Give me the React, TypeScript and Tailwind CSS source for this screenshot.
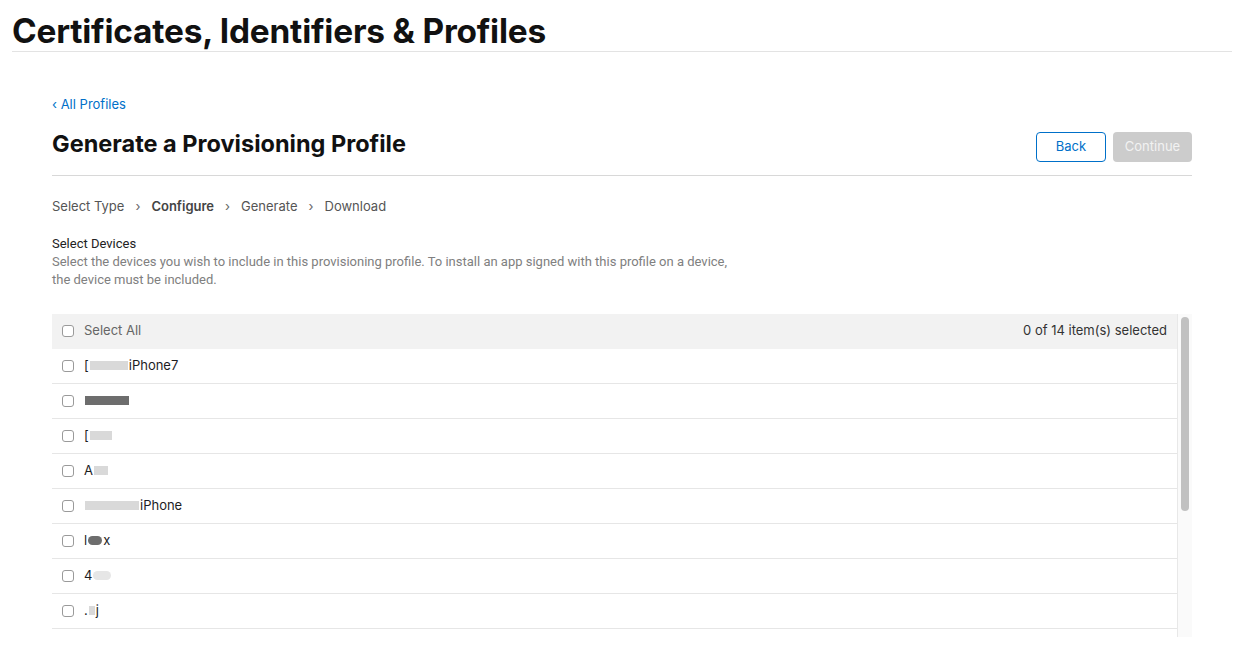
import React from 'react';

const font = { fontFamily: 'Inter, "Noto Sans", sans-serif' };
const narrow = { fontFamily: 'Roboto, "Liberation Sans", sans-serif' };

type Device = { id: number; prefix?: string; smudge?: string; suffix?: string };

const devices: Device[] = [
  { id: 1, prefix: '[', smudge: 'w-[38px]', suffix: 'iPhone7' },
  { id: 2, smudge: 'w-[44px] bg-[#6d6d6d]', suffix: '' },
  { id: 3, prefix: '[', smudge: 'w-[22px]', suffix: '' },
  { id: 4, prefix: 'A', smudge: 'w-[14px]', suffix: '' },
  { id: 5, smudge: 'w-[54px]', suffix: 'iPhone' },
  { id: 6, prefix: 'l', smudge: 'w-[14px] bg-[#6d6d6d] rounded-full', suffix: 'x' },
  { id: 7, prefix: '4', smudge: 'w-[18px] bg-[#e6e6e6] rounded-full', suffix: '' },
  { id: 8, prefix: '.', smudge: 'w-[6px]', suffix: 'j' },
];

function Checkbox() {
  return <span className="inline-block h-[12px] w-[12px] shrink-0 rounded-[3px] border border-[#9a9a9a] bg-white" />;
}

function DeviceRow({ d }: { d: Device }) {
  return (
    <div className="flex h-[35px] shrink-0 items-center gap-[10px] border-b border-[#e6e6e6] pl-[10px] text-[13px] text-[#1d1d1f]">
      <Checkbox />
      <span className="flex items-center">
        {d.prefix && <span>{d.prefix}</span>}
        {d.smudge && <span className={`mx-[1px] inline-block h-[9px] ${d.smudge.includes('bg-') ? '' : 'bg-[#d9d9d9]'} ${d.smudge}`} />}
        {d.suffix && <span>{d.suffix}</span>}
      </span>
    </div>
  );
}

export default function App() {
  return (
    <div className="h-[657px] overflow-hidden bg-white" style={font}>
      <header className="mx-[12px] mr-[22px] border-b border-[#e3e3e3] pt-[12px] pb-[1px]">
        <h1 className="text-[33.4px] leading-[38px] font-bold tracking-[-0.2px] text-[#111]">
          Certificates, Identifiers &amp; Profiles
        </h1>
      </header>

      <main className="mx-[52px] mr-[62px] pt-[39px]">
        <a className="text-[13px] text-[#0070c9]">‹ All Profiles</a>

        <div className="mt-[14px] flex items-start justify-between border-b border-[#d8d8d8] pb-[13px]">
          <h2 className="text-[23.5px] leading-[30px] font-bold text-[#111]">Generate a Provisioning Profile</h2>
          <div className="mt-[3px] flex gap-[7px]">
            <button className="h-[30px] w-[70px] rounded-[4px] border border-[#0070c9] text-[13px] text-[#0070c9]">Back</button>
            <button className="h-[30px] w-[79px] rounded-[4px] bg-[#cccccc] text-[13px] text-[#f2f2f2]">Continue</button>
          </div>
        </div>

        <nav className="mt-[21px] flex items-center text-[13px] text-[#555]">
          <span>Select Type</span>
          <span className="mx-[11px] text-[#666]">›</span>
          <span className="font-semibold text-[#444]">Configure</span>
          <span className="mx-[11px] text-[#666]">›</span>
          <span>Generate</span>
          <span className="mx-[11px] text-[#666]">›</span>
          <span>Download</span>
        </nav>

        <section className="mt-[18px]" style={narrow}>
          <h3 className="text-[13px] leading-[18px] text-[#222]">Select Devices</h3>
          <p className="w-[685px] text-[13px] leading-[18px] text-[#808080]">
            Select the devices you wish to include in this provisioning profile. To install an app signed with this profile on a device, the device must be included.
          </p>
        </section>

        <div className="mt-[25px] flex h-[323px]">
          <div className="flex flex-1 flex-col overflow-hidden">
            <div className="flex h-[35px] shrink-0 items-center justify-between bg-[#f2f2f2] pr-[10px] pl-[10px] text-[13px]">
              <span className="flex items-center gap-[10px] text-[#666]">
                <Checkbox />
                Select All
              </span>
              <span className="text-[#333]">0 of 14 item(s) selected</span>
            </div>
            {devices.map((d) => (
              <DeviceRow key={d.id} d={d} />
            ))}
          </div>
          <div className="w-[15px] border-l border-[#e8e8e8] bg-[#fafafa] pt-[3px]">
            <div className="mx-auto h-[194px] w-[8px] rounded-full bg-[#c1c1c1]" />
          </div>
        </div>
      </main>
    </div>
  );
}
